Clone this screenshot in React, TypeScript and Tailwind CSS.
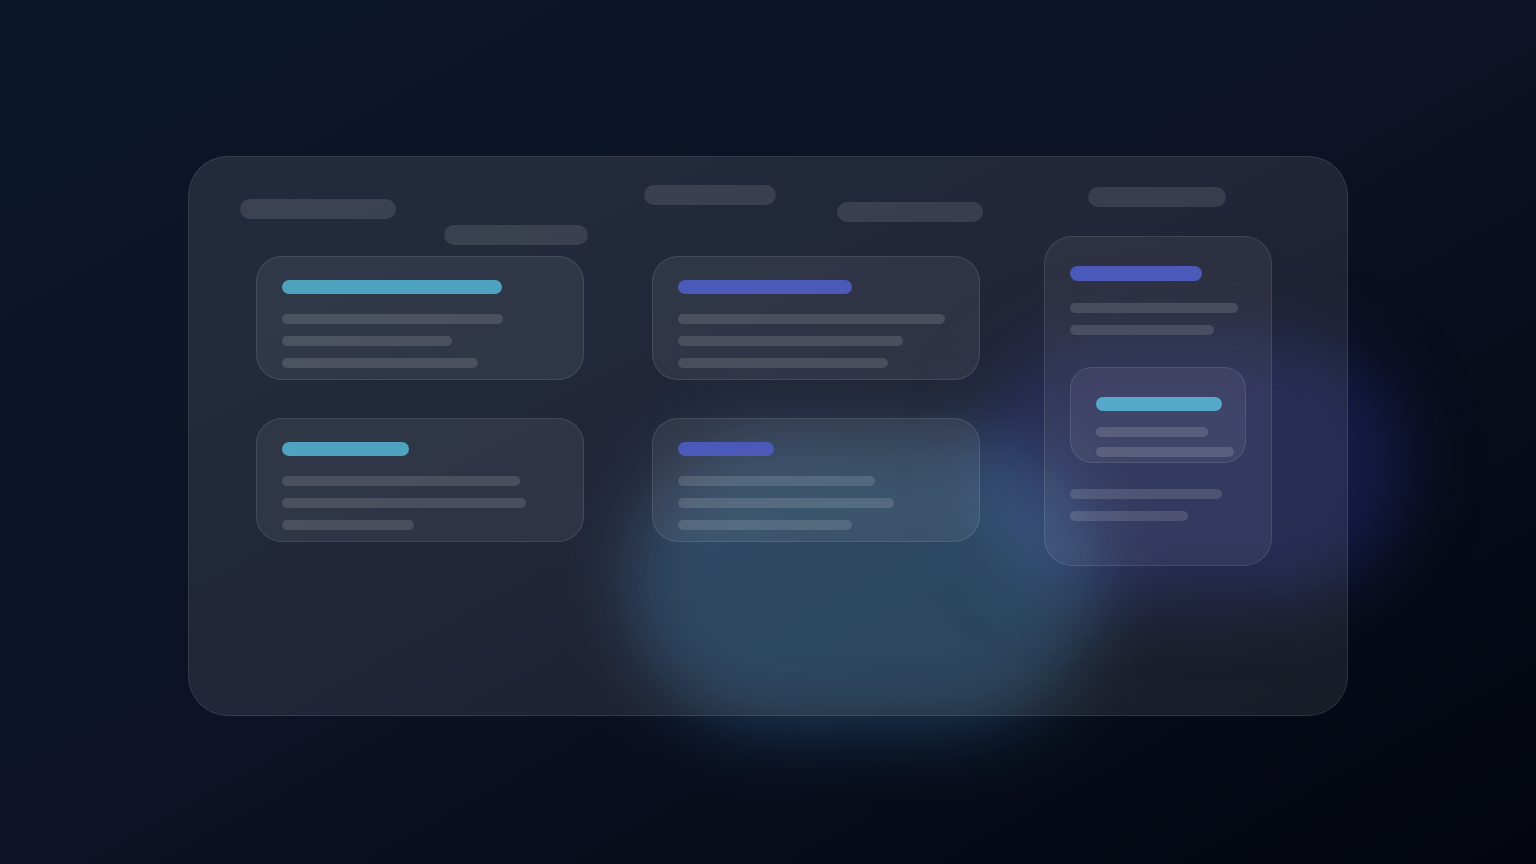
import React from "react";

type Line = number;

function Card({
  w,
  h,
  title,
  titleColor,
  lines,
}: {
  w: number;
  h: number;
  title: number;
  titleColor: "teal" | "indigo";
  lines: Line[];
}) {
  return (
    <div
      className="flex flex-col rounded-[26px] border border-white/10 bg-white/[0.065] pt-[23px] pl-[25px]"
      style={{ width: w, height: h }}
    >
      <div
        className={`h-[14px] rounded-full ${titleColor === "teal" ? "bg-[#4ea3bf]" : "bg-[#4b59b9]"}`}
        style={{ width: title }}
      />
      <div className="mt-[20px] flex flex-col gap-[12px]">
        {lines.map((l, i) => (
          <div key={i} className="h-[10px] rounded-full bg-white/[0.13]" style={{ width: l }} />
        ))}
      </div>
    </div>
  );
}

function Pill({ w, className = "" }: { w: number; className?: string }) {
  return <div className={`h-[20px] rounded-full bg-white/[0.11] ${className}`} style={{ width: w }} />;
}

export default function App() {
  return (
    <div
      className="relative isolate h-[864px] w-full overflow-hidden bg-gradient-to-br from-[#0a1728] via-[#0d1226] to-[#03060e] pt-[156px] pl-[188px]"
      style={{ fontFamily: "Inter, 'Noto Sans', sans-serif" }}
    >
      {/* soft ambient glows behind the glass panel */}
      <div className="pointer-events-none absolute left-[975px] top-[335px] h-[265px] w-[430px] rounded-full bg-[#151b46] blur-[34px]" />
      <div className="pointer-events-none absolute left-[628px] top-[432px] h-[300px] w-[470px] rounded-full bg-[#122b3a] mix-blend-screen blur-[34px]" />

      <div className="relative z-10 flex h-[560px] w-[1160px] items-start rounded-[40px] border border-white/[0.09] bg-gradient-to-br from-white/[0.10] via-white/[0.085] to-white/[0.08] pl-[51px]">
        {/* column 1 */}
        <div className="mt-[42px] flex w-[404px] flex-col">
          <div className="flex items-start">
            <Pill w={156} />
            <Pill w={144} className="ml-[48px] mt-[26px]" />
          </div>
          <div className="ml-[16px] mt-[11px] flex flex-col gap-[38px]">
            <Card w={328} h={124} title={220} titleColor="teal" lines={[221, 170, 196]} />
            <Card w={328} h={124} title={127} titleColor="teal" lines={[238, 244, 132]} />
          </div>
        </div>

        {/* column 2 */}
        <div className="mt-[28px] flex w-[400px] flex-col">
          <div className="flex items-start">
            <Pill w={132} />
            <Pill w={146} className="ml-[61px] mt-[17px]" />
          </div>
          <div className="ml-[8px] mt-[34px] flex flex-col gap-[38px]">
            <Card w={328} h={124} title={174} titleColor="indigo" lines={[267, 225, 210]} />
            <Card w={328} h={124} title={96} titleColor="indigo" lines={[197, 216, 174]} />
          </div>
        </div>

        {/* column 3 */}
        <div className="mt-[30px] flex flex-col">
          <Pill w={138} className="ml-[44px]" />
          <div className="mt-[29px] flex h-[330px] w-[228px] flex-col rounded-[28px] border border-white/10 bg-white/[0.06] pt-[29px] pl-[25px]">
            <div className="h-[15px] w-[132px] rounded-full bg-[#4b59b9]" />
            <div className="mt-[22px] flex flex-col gap-[12px]">
              <div className="h-[10px] w-[168px] rounded-full bg-white/[0.13]" />
              <div className="h-[10px] w-[144px] rounded-full bg-white/[0.13]" />
            </div>
            <div className="mt-[32px] flex h-[96px] w-[176px] flex-col rounded-[22px] border border-white/10 bg-white/[0.06] pt-[29px] pl-[25px]">
              <div className="h-[14px] w-[126px] rounded-full bg-[#55aacb]" />
              <div className="mt-[16px] flex flex-col gap-[10px]">
                <div className="h-[10px] w-[112px] rounded-full bg-white/[0.14]" />
                <div className="h-[10px] w-[138px] rounded-full bg-white/[0.14]" />
              </div>
            </div>
            <div className="mt-[26px] flex flex-col gap-[12px]">
              <div className="h-[10px] w-[152px] rounded-full bg-white/[0.13]" />
              <div className="h-[10px] w-[118px] rounded-full bg-white/[0.13]" />
            </div>
          </div>
        </div>
      </div>
    </div>
  );
}
